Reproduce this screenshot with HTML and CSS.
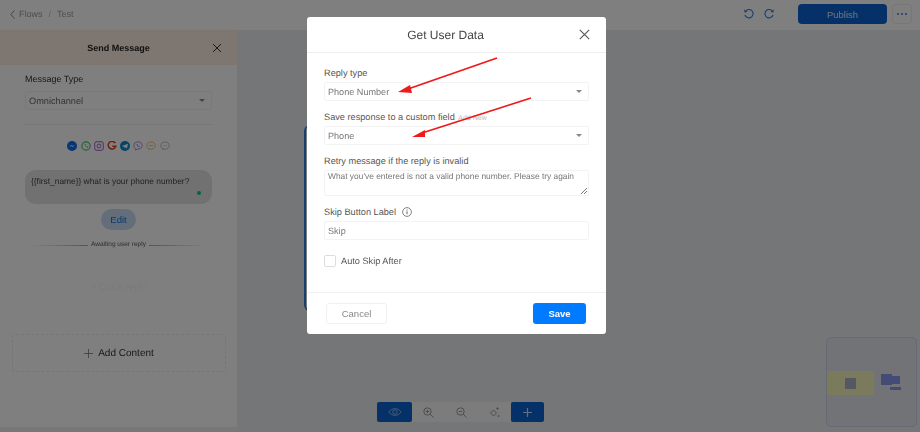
FILE: index.html
```html
<!DOCTYPE html>
<html>
<head>
  <meta charset="UTF-8">
  <title>Test</title>
  <link rel="stylesheet" href="styles.css">
</head>

<body>
  <div class="app">
    <div class="topbar">
      <div class="crumbs">
        <svg class="back" width="5" height="9" viewBox="0 0 5 9"><path d="M4.500.5.800 4.500l3.700 4" fill="none" stroke="currentColor" stroke-width="1"/></svg>
        <span>Flows</span><span class="sep">/</span><span>Test</span>
      </div>
      <div class="actions">
        <svg class="history" width="12" height="12" viewBox="0 0 12 12"><path d="M3 2.600A4.200 4.200 0 1 1 1.900 7" fill="none" stroke="currentColor" stroke-width="1.100"/><path d="M1.200 1.200 1.500 4.400 4.600 3.900z" fill="currentColor"/></svg>
        <svg class="history" width="12" height="12" viewBox="0 0 12 12"><path d="M9 2.600A4.200 4.200 0 1 0 10.100 7" fill="none" stroke="currentColor" stroke-width="1.100"/><path d="M10.800 1.200 10.500 4.400 7.400 3.900z" fill="currentColor"/></svg>
        <button class="publish">Publish</button>
        <button class="more"><i></i><i></i><i></i></button>
      </div>
    </div>

    <div class="main">
      <div class="panel">
        <div class="panel-head">
          <span>Send Message</span>
          <svg class="panel-close" width="10" height="10" viewBox="0 0 10 10"><path d="M1 1l8 8M9 1 1 9" stroke="currentColor" stroke-width="1"/></svg>
        </div>
        <div class="panel-body">
          <div class="panel-label">Message Type</div>
          <div class="panel-select">Omnichannel<b class="caret"></b></div>
          <div class="panel-rule"></div>
          <div class="channels">
            <svg width="10" height="10" viewBox="0 0 11 11"><circle cx="5.500" cy="5.500" r="5.500" fill="#0a6cf0"/><path d="M2.500 6.600 4.600 4.400l1.500 1.200 2.400-1.200-2.100 2.200-1.500-1.200z" fill="#fff"/></svg>
            <svg width="10" height="10" viewBox="0 0 11 11"><circle cx="5.500" cy="5.500" r="4.600" fill="none" stroke="#3fc66b" stroke-width="1.300"/><path d="M3.700 3.400c.9 2.300 2 3.400 3.900 4l.4-1-1.200-.6-.5.400C5.600 5.800 5.200 5.300 5 4.700l.4-.5-.6-1.200z" fill="#3fc66b"/></svg>
            <svg width="10" height="10" viewBox="0 0 11 11"><rect x=".7" y=".7" width="9.600" height="9.600" rx="2.600" fill="none" stroke="#b77ad6" stroke-width="1.300"/><circle cx="5.500" cy="5.500" r="2.100" fill="none" stroke="#b77ad6" stroke-width="1.200"/></svg>
            <svg width="10" height="10" viewBox="0 0 12 12"><path d="M10 2.600A4.600 4.600 0 1 0 10.500 6.200H6.300" fill="none" stroke="#e0443a" stroke-width="1.900"/></svg>
            <svg width="10" height="10" viewBox="0 0 11 11"><circle cx="5.500" cy="5.500" r="5.500" fill="#0a86cf"/><path d="M2 5.500 8.800 2.900 7.700 8.300 5.500 6.800 4.600 7.700 4.400 6.300z" fill="#fff"/></svg>
            <svg width="10" height="10" viewBox="0 0 12 12"><path d="M6 1C3 1 1 2.500 1 5.500c0 2 .8 3.200 2.200 3.900V11l1.700-1.300C8.500 10 11 8.500 11 5.500 11 2.500 9 1 6 1z" fill="none" stroke="#9b83e0" stroke-width="1.100"/><path d="M4.200 3.600c.3 2 1.700 3.500 3.700 4l.6-1-1.100-.7-.5.400C6.200 5.900 5.800 5.400 5.600 4.800l.4-.5-.8-1z" fill="#9b83e0"/></svg>
            <svg width="10" height="10" viewBox="0 0 12 11"><ellipse cx="6" cy="5" rx="5" ry="4.300" fill="none" stroke="#f0bf6a" stroke-width="1.100"/><path d="M3 9.800 4 8M3.500 5h5" stroke="#f0bf6a" stroke-width="1.200"/></svg>
            <svg width="10" height="10" viewBox="0 0 12 11"><ellipse cx="6" cy="5" rx="5" ry="4.300" fill="none" stroke="#b4b4b4" stroke-width="1"/><path d="M3 9.800 4 8" stroke="#b4b4b4"/><path d="M3.600 5h1M5.500 5h1M7.400 5h1" stroke="#b4b4b4"/></svg>
          </div>
          <div class="bubble">{{first_name}} what is your phone number?<b class="online"></b></div>
          <button class="edit">Edit</button>
          <div class="awaiting"><i></i><span>Awaiting user reply</span><i></i></div>
          <div class="quick">+ Quick reply</div>
        </div>
        <div class="add-content">
          <svg width="9" height="9" viewBox="0 0 9 9"><path d="M4.500 0v9M0 4.500h9" stroke="currentColor" stroke-width=".8"/></svg>
          Add Content
        </div>
      </div>

      <div class="canvas">
        <div class="node"></div>
        <div class="toolbar">
          <button class="tool-blue eye">
            <svg width="14" height="10" viewBox="0 0 14 10"><path d="M.8 5C3.800.6 10.200.6 13.200 5 10.200 9.400 3.800 9.400.8 5z" fill="none" stroke="currentColor"/><circle cx="7" cy="5" r="2.200" fill="none" stroke="currentColor"/></svg>
          </button>
          <div class="tools">
            <svg width="11" height="11" viewBox="0 0 11 11"><circle cx="4.500" cy="4.500" r="3.700" fill="none" stroke="currentColor"/><path d="M7.300 7.300 10.500 10.500M2.800 4.500h3.400M4.500 2.800v3.400" stroke="currentColor"/></svg>
            <svg width="11" height="11" viewBox="0 0 11 11"><circle cx="4.500" cy="4.500" r="3.700" fill="none" stroke="currentColor"/><path d="M7.300 7.300 10.500 10.500M2.800 4.500h3.400" stroke="currentColor"/></svg>
            <svg width="11" height="11" viewBox="0 0 11 11"><path d="M4.500 3 7.500 6 4.500 9 1.500 6z" fill="none" stroke="currentColor"/><path d="M8.500 0v3M7 1.500h3M9.500 8v2M8.500 9h2" stroke="currentColor" stroke-width=".8"/></svg>
          </div>
          <button class="tool-blue plus">
            <svg width="9" height="9" viewBox="0 0 9 9"><path d="M4.500 0v9M0 4.500h9" stroke="currentColor" stroke-width="1.200"/></svg>
          </button>
        </div>
        <div class="minimap">
          <div class="mini-start"><i></i></div>
          <div class="mini-group"><i class="m1"></i><i class="m2"></i><i class="m3"></i></div>
        </div>
      </div>
    </div>
  </div>

  <div class="overlay"></div>

  <div class="modal">
    <div class="modal-head">
      <span>Get User Data</span>
      <svg class="modal-close" width="11" height="11" viewBox="0 0 11 11"><path d="M.8.8l9.400 9.400M10.200.8.800 10.200" stroke="currentColor" stroke-width="1.100"/></svg>
    </div>
    <div class="modal-body">
      <label class="field-label">Reply type</label>
      <div class="field">Phone Number<b class="caret"></b></div>
      <label class="field-label">Save response to a custom field <em class="add-new">Add New</em></label>
      <div class="field">Phone<b class="caret"></b></div>
      <label class="field-label">Retry message if the reply is invalid</label>
      <div class="field area">What you've entered is not a valid phone number. Please try again
        <svg class="grip" width="6" height="6" viewBox="0 0 6 6"><path d="M0 6 6 0M3 6l3-3" stroke="#555" stroke-width=".8"/></svg>
      </div>
      <label class="field-label">Skip Button Label
        <svg class="info" width="10" height="10" viewBox="0 0 10 10"><circle cx="5" cy="5" r="4.400" fill="none" stroke="#666" stroke-width=".8"/><path d="M5 4.200v3M5 2.500v1" stroke="#666"/></svg>
      </label>
      <div class="field">Skip</div>
      <div class="check-row"><span class="check"></span>Auto Skip After</div>
    </div>
    <div class="modal-foot">
      <button class="cancel">Cancel</button>
      <button class="save">Save</button>
    </div>
  </div>

  <!-- annotation arrows on top of the screenshot -->
  <svg class="arrows" width="920" height="432" viewBox="0 0 920 432">
    <path d="M497 58 408 89" stroke="#f01818" stroke-width="1.800"/>
    <path d="M398 92 410 85 412 93z" fill="#f01818"/>
    <path d="M531 98 422 133" stroke="#f01818" stroke-width="1.800"/>
    <path d="M412 137 425 130 425 137z" fill="#f01818"/>
  </svg>
</body>
</html>
```

FILE: styles.css
```css
* { box-sizing: border-box; }

html, body { margin: 0; height: 100%; overflow: hidden; }
body { font-family: "Liberation Sans", Arial, sans-serif; color: #333; background: #eceef0; text-rendering: geometricPrecision; }
button { font-family: inherit; padding: 0; border: 0; }

.app { display: flex; flex-direction: column; height: 432px; filter: blur(.5px); }

/* top bar */
.topbar { flex: none; height: 30px; padding-bottom: 2px; display: flex; align-items: center; justify-content: space-between; background: #fff; }
.crumbs { display: flex; align-items: center; gap: 5px; padding-left: 10px; font-size: 9px; color: #9a9a9a; }
.crumbs .back { color: #888; margin-right: -1px; }
.crumbs .sep { color: #bbb; margin: 0 1px; }
.actions { display: flex; align-items: center; padding-right: 8px; }
.history { color: #2f7fd8; margin-right: 8px; }
.history + .publish { margin-left: 15px; }
.publish { width: 89px; height: 20px; border-radius: 4px; background: #0a62d0; color: #dbe9fb; font-size: 9.500px; }
.more { width: 20px; height: 20px; margin-left: 5px; display: flex; align-items: center; justify-content: center; gap: 1.500px; background: #fff; border: 1px solid #eee; border-radius: 4px; }
.more i { width: 2.500px; height: 2.500px; border-radius: 50%; background: #2f7fd8; }

.main { flex: 1; display: flex; min-height: 0; }

/* left panel */
.panel { flex: none; width: 237px; height: 397px; display: flex; flex-direction: column; background: #fff; }
.panel-head { flex: none; height: 35px; display: flex; align-items: center; justify-content: center; position: relative; background: #fdeee2; font-size: 9px; font-weight: bold; color: #222; }
.panel-close { position: absolute; right: 15px; top: 13px; color: #333; }
.panel-body { flex: none; height: 269px; padding: 8px 25px 0; display: flex; flex-direction: column; }
.panel-label { font-size: 9px; color: #333; height: 12px; line-height: 12px; }
.panel-select { height: 19px; margin-top: 6px; padding-left: 3px; line-height: 18px; position: relative; font-size: 9.200px; color: #666; border: 1px solid #f2f2f2; border-radius: 3px; }
.panel-rule { height: 1px; margin-top: 14px; background: #eee; }
.channels { display: flex; justify-content: center; align-items: center; gap: 3.200px; height: 10px; margin-top: 16px; }
.bubble { height: 34px; margin-top: 19px; padding: 6px 6px 0; position: relative; font-size: 8.400px; color: #444; background: #e2e2e2; border-radius: 11px; }
.online { position: absolute; right: 11px; bottom: 9px; width: 4px; height: 4px; border-radius: 50%; background: #00c896; }
.edit { align-self: center; width: 35px; height: 21px; margin-top: 5px; border-radius: 11px; background: #c9dcf5; color: #1670dc; font-size: 9.500px; }
.awaiting { display: flex; align-items: center; justify-content: center; gap: 3px; margin-top: 9px; height: 10px; font-size: 6.500px; color: #555; }
.awaiting i { width: 57px; height: 1px; margin-top: 2px; background: linear-gradient(90deg, #fff, #aaa); }
.awaiting i:last-child { background: linear-gradient(90deg, #aaa, #fff); }
.quick { align-self: center; width: 66px; height: 20px; margin-top: 29px; line-height: 20px; text-align: center; font-size: 9.500px; color: #f4f4f4; border-radius: 4px; }
.add-content { flex: none; width: 214px; height: 38px; margin-left: 12px; display: flex; align-items: center; justify-content: center; gap: 5px; font-size: 10px; color: #333; border: 1px dashed #e6ecf6; border-radius: 4px; }
.add-content svg { color: #777; margin-top: 1px; }

/* flow canvas */
.canvas { flex: 1; position: relative; background: #ebedf0; }
.node { position: absolute; left: 67px; top: 95px; width: 60px; height: 186px; background: #fff; border-left: 2px solid #2f7fd8; border-radius: 6px; }
.toolbar { position: absolute; left: 140px; top: 372px; display: flex; height: 20px; }
.tool-blue { display: flex; align-items: center; justify-content: center; height: 20px; background: #0a62d0; border-radius: 2px; color: #8bb8ee; }
.eye { width: 35px; }
.plus { width: 33px; color: #c6ddf7; }
.tools { width: 99px; display: flex; align-items: center; justify-content: space-between; padding: 0 11px; background: #f8f8f8; color: #9a9a9a; }
.minimap { position: absolute; left: 589px; top: 307px; width: 91px; height: 90px; border: 1px solid #ced4ec; border-radius: 5px; background: #e2e6ec; }
.mini-start { position: absolute; left: 0; top: 33px; width: 47px; height: 24px; display: flex; align-items: center; justify-content: center; background: #f6f5b8; }
.mini-start i { width: 11px; height: 11px; background: #a8b0c4; }
.mini-group i { position: absolute; background: #8a96ee; }
.mini-group .m1 { left: 54px; top: 36px; width: 11px; height: 11px; }
.mini-group .m2 { left: 63px; top: 38px; width: 10px; height: 8px; }
.mini-group .m3 { left: 63px; top: 49px; width: 11px; height: 3px; }

.caret { position: absolute; right: 6px; top: 7px; border: 3px solid transparent; border-top: 3px solid #888; border-bottom: 0; }

/* dimmed backdrop and dialog */
.overlay { position: fixed; left: 0; top: 0; width: 100%; height: 100%; background: rgba(0, 0, 0, .5); }
.modal { position: fixed; left: 307px; top: 17px; width: 299px; height: 317px; display: flex; flex-direction: column; background: #fff; border-radius: 3px; filter: blur(.4px); }
.modal-head { flex: none; height: 36px; padding-right: 22px; display: flex; align-items: center; justify-content: center; position: relative; font-size: 12px; color: #444; border-bottom: 1px solid #eee; }
.modal-close { position: absolute; right: 16px; top: 12px; color: #555; }
.modal-body { flex: 1; padding: 14px 17px 0; display: flex; flex-direction: column; }
.field-label { height: 12px; line-height: 12px; font-size: 9.200px; color: #555; white-space: nowrap; }
.add-new { margin-left: 1px; font-style: normal; font-size: 7px; color: #bbb; }
.info { margin-left: 3px; vertical-align: -1.500px; }
.field { height: 19px; margin: 3px 0 10px; padding-left: 3px; line-height: 19px; position: relative; font-size: 9.100px; color: #777; border: 1px solid #f3f3f3; border-radius: 2px; }
.field.area { height: 26px; line-height: 11px; font-size: 8.400px; white-space: nowrap; }
.grip { position: absolute; right: 1px; bottom: 1px; }
.check-row { display: flex; align-items: center; gap: 5px; margin-top: 5px; font-size: 9.200px; color: #555; }
.check { width: 12px; height: 12px; border: 1px solid #ddd; border-radius: 2px; }
.modal-foot { flex: none; height: 42px; padding: 0 20px 0 19px; display: flex; align-items: center; justify-content: space-between; border-top: 1px solid #f0f0f0; }
.cancel { width: 61px; height: 21px; background: #fff; color: #888; font-size: 9.500px; border: 1px solid #f0f0f0; border-radius: 3px; }
.save { width: 53px; height: 21px; background: #007bff; color: #fff; font-size: 9.500px; font-weight: bold; border-radius: 3px; }

.arrows { position: fixed; left: 0; top: 0; pointer-events: none; }
```
